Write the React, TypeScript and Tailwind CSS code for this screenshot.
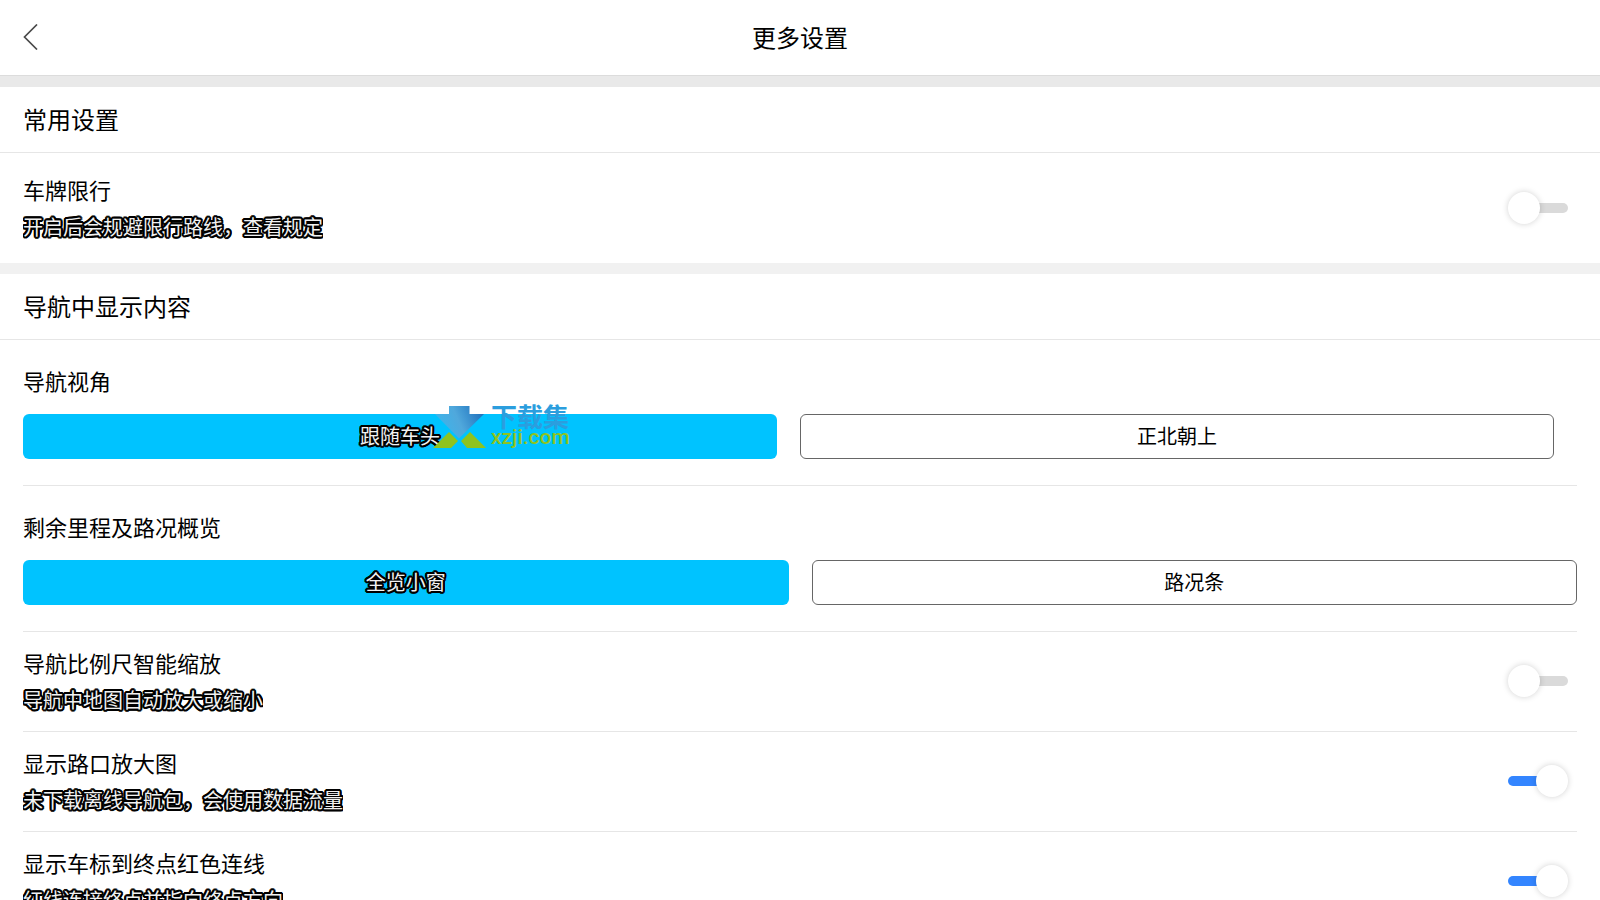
import { useId, useState } from 'react';

interface SwitchItem {
  title: string;
  desc: string;
  defaultOn: boolean;
}

const DISPLAY_SWITCHES: SwitchItem[] = [
  { title: '导航比例尺智能缩放', desc: '导航中地图自动放大或缩小', defaultOn: false },
  { title: '显示路口放大图', desc: '未下载离线导航包，会使用数据流量', defaultOn: true },
  { title: '显示车标到终点红色连线', desc: '红线连接终点并指向终点方向', defaultOn: true },
];

// 白字黑描边
const OUTLINED =
  'text-[#f2f2f2] [text-shadow:2px_0_#000,-2px_0_#000,0_2px_#000,0_-2px_#000,2px_1px_#000,2px_-1px_#000,-2px_1px_#000,-2px_-1px_#000,1px_2px_#000,-1px_2px_#000,1px_-2px_#000,-1px_-2px_#000]';

function SectionTitle({ children }: { children: string }) {
  return (
    <h2 className="h-[66px] px-[23px] pb-0.5 flex items-center text-2xl border-b border-[#e6e6e6]">{children}</h2>
  );
}

function SwitchRow({ title, desc, defaultOn }: SwitchItem) {
  const id = useId();
  const [on, setOn] = useState(defaultOn);

  return (
    <div className="flex items-center justify-between pr-[9px]">
      <div>
        <label htmlFor={id} className="block text-[22px] leading-9 mb-0.5">{title}</label>
        <p className={`text-xl leading-9 overflow-hidden ${OUTLINED}`}>{desc}</p>
      </div>
      <input
        id={id}
        type="checkbox"
        role="switch"
        checked={on}
        onChange={(e) => setOn(e.target.checked)}
        className="appearance-none shrink-0 w-[60px] h-8 flex items-center checked:flex-row-reverse before:relative before:z-10 before:size-8 before:rounded-full before:bg-white before:shadow-[0_0_6px_rgba(0,0,0,0.18)] after:flex-1 after:h-2.5 after:-ml-1 after:rounded-r-full after:bg-[#dadada] checked:after:ml-0 checked:after:-mr-1 checked:after:rounded-r-none checked:after:rounded-l-full checked:after:bg-[#3385ff]"
      />
    </div>
  );
}

function OptionGroup({ label, options, className }: { label: string; options: string[]; className?: string }) {
  const [selected, setSelected] = useState(0);

  return (
    <div className="pt-[22px] pb-[26px] border-b border-[#e6e6e6]">
      <h3 className="text-[22px] leading-9 mb-4">{label}</h3>
      <div className={`grid grid-cols-2 gap-[23px] ${className ?? ''}`}>
        {options.map((option, i) => (
          <button
            key={option}
            type="button"
            onClick={() => setSelected(i)}
            className={`h-[45px] pb-0.5 rounded-md text-xl ${
              i === selected ? `bg-[#00c3ff] ${OUTLINED}` : 'bg-white border border-[#666]'
            }`}
          >
            {option}
          </button>
        ))}
      </div>
    </div>
  );
}

function Watermark() {
  return (
    <div className="absolute left-[433px] top-[406px] flex gap-[5px] pointer-events-none">
      <svg width="53" height="42" viewBox="0 0 53 42">
        <defs>
          <linearGradient id="arrow" x1="0" y1="0.3" x2="1" y2="0">
            <stop offset="0" stopColor="#3db4ea" />
            <stop offset="0.4" stopColor="#50a8dc" />
            <stop offset="1" stopColor="#1668b8" />
          </linearGradient>
        </defs>
        <path d="M16 0H36.500V8H51L26 32.500L2 8H16Z" fill="url(#arrow)" />
        <path d="M16 26L25 35L18 42H0Z" fill="#8fc31f" />
        <path d="M37 26L53 42H34L28 35Z" fill="#8fc31f" />
      </svg>
      <div className="font-bold text-[26px] leading-5 text-[#2b9ede]">
        <div>下载集</div>
        <div className="font-[Roboto] font-medium text-[21px] leading-[22px] text-[#8fc31f]">xzji.com</div>
      </div>
    </div>
  );
}

export default function MoreSettingsPage() {
  return (
    <div className="relative h-screen overflow-y-auto [scrollbar-width:none] bg-white text-black font-['Noto_Sans_CJK_SC',sans-serif]">
      {/* 顶栏 */}
      <header className="h-[76px] px-[23px] pb-0.5 grid grid-cols-[1fr_auto_1fr] items-center border-b border-[#dcdcdc]">
        <button type="button" aria-label="返回" className="justify-self-start">
          <svg width="15" height="26" viewBox="0 0 15 26" fill="none" stroke="#4a4a4a" strokeWidth="1.700">
            <path d="M14 0.500L1.500 13L14 25.500" />
          </svg>
        </button>
        <h1 className="text-2xl">更多设置</h1>
      </header>

      {/* 常用设置 */}
      <section className="border-t-11 border-[#e9e9e9]">
        <SectionTitle>常用设置</SectionTitle>
        <div className="px-[23px] py-[18px]">
          <SwitchRow title="车牌限行" desc="开启后会规避限行路线，查看规定" defaultOn={false} />
        </div>
      </section>

      {/* 导航中显示内容 */}
      <section className="border-t-11 border-[#f1f1f1]">
        <SectionTitle>导航中显示内容</SectionTitle>
        <div className="px-[23px]">
          <OptionGroup label="导航视角" options={['跟随车头', '正北朝上']} className="pr-[23px]" />
          <OptionGroup label="剩余里程及路况概览" options={['全览小窗', '路况条']} />
          {DISPLAY_SWITCHES.map((item) => (
            <div key={item.title} className="pt-3 pb-[13px] border-b border-[#e6e6e6]">
              <SwitchRow {...item} />
            </div>
          ))}
        </div>
      </section>

      <Watermark />
    </div>
  );
}
